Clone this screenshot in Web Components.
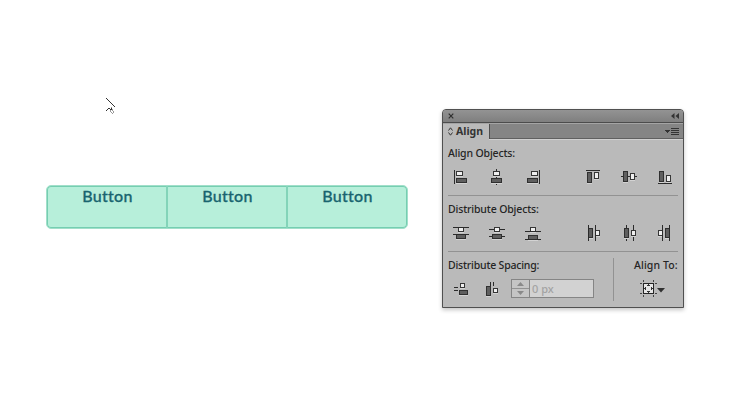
<!DOCTYPE html>
<html lang="en">
<head>
<meta charset="utf-8">
<title>Align panel</title>
<style>
html,body{margin:0;height:100%;background:#fff;overflow:hidden}
</style>
</head>
<body>
<design-canvas>
  <button-group>
    <group-button>Button</group-button>
    <group-button>Button</group-button>
    <group-button>Button</group-button>
  </button-group>
  <align-panel></align-panel>
  <canvas-cursor slot="cursor"></canvas-cursor>
</design-canvas>
<script>
function define(name, html, setup) {
  const template = document.createElement('template');
  template.innerHTML = html;
  customElements.define(name, class extends HTMLElement {
    constructor() {
      super();
      this.attachShadow({mode: 'open'}).appendChild(template.content.cloneNode(true));
    }
    connectedCallback() { if (setup) setup(this); }
  });
}

define('design-canvas', `<style>
:host{display:flex;position:relative;width:738px;height:420px;box-sizing:border-box;padding:109px 0 0 46px;align-items:flex-start;gap:34px}
</style><slot></slot><slot name="cursor"></slot>`);

define('canvas-cursor', `<style>
:host{position:absolute;left:105px;top:97px;width:12px;height:18px}svg{display:block}
</style><svg width="12" height="18" shape-rendering="crispEdges">
<path d="M1 1h1v1h1v1h1v1h1v1h1v1h1v1h1v1h1v1h1v1h-1v-1h-1v-1h-1v-1h-1v-1h-1v-1h-1v-1h-1v-1h-1v-1h-1z" fill="#333"/>
<path d="M1 13h1v1h-1zM2 12h1v1h-1zM3 11h2v1h-2zM5 12h1v1h-1zM6 11h1v2h-1z" fill="#333"/>
<path d="M6 10h1v1h-1zM5 13h1v2h-1zM7 12h1v2h-1zM8 14h1v2h-1zM6 15h1v1h-1zM7 16h1v1h-1z" fill="#999"/></svg>`);

define('button-group', `<style>
:host{display:flex;box-sizing:border-box;width:362px;height:44px;margin-top:76px;border:1px solid #a2dfca;border-radius:5px;background:#b7efda;box-shadow:inset 0 0 0 1px #75ceb1}
</style><slot></slot>`);

define('group-button', `<style>
:host{flex:1;display:block;box-sizing:border-box;text-align:center;font:500 16px/20px Lato,sans-serif;letter-spacing:.25px;-webkit-text-stroke:.3px #19646f;color:#19646f;padding:0 0 0 1px}
:host(:not(:first-child)){box-shadow:-1px 0 #83d4b9,inset 1px 0 #83d4b9}
</style><slot></slot>`);

/* Icon parts: w = hollow object, d = solid object, l = guide line; then x, y, width, height. */
const icons = {
  'left': 'l3,3,1,14 w5,4,7,5 d5,11,11,5',
  'center': 'l9,2,1,16 w6,4,7,5 d4,11,11,5',
  'right': 'l16,3,1,14 w8,4,7,5 d4,11,11,5',
  'top': 'l3,3,14,1 d4,5,5,11 w11,5,5,7',
  'middle': 'l2,9,16,1 d4,4,5,11 w11,6,5,7',
  'bottom': 'd4,4,5,11 w11,8,5,7 l3,16,14,1',
  'dist-top': 'w7,4,6,5 d5,11,10,5 l2,4,16,1 l2,11,16,1',
  'dist-middle': 'l2,6,16,1 l2,13,16,1 w7,4,6,5 d5,11,10,5',
  'dist-bottom': 'w7,4,6,5 d5,12,10,5 l2,8,16,1 l2,16,16,1',
  'dist-left': 'd5,5,5,10 w12,7,5,6 l5,2,1,16 l12,2,1,16',
  'dist-center': 'l7,2,1,16 l14,2,1,16 d5,5,5,10 w12,7,5,6',
  'dist-right': 'w3,7,5,6 d10,5,5,10 l7,2,1,16 l14,2,1,16',
  'space-v': 'w9,4,5,5 d8,11,9,5 l3,8,4,1 l3,11,4,1',
  'space-h': 'd4,7,5,10 w11,9,5,5 l8,3,1,4 l11,3,1,4'
};
define('align-icon', `<style>:host{display:block;width:20px;height:20px}svg{display:block}</style>
<svg width="20" height="20" shape-rendering="crispEdges"></svg>`, el => {
  const rect = (x, y, w, h, f) => `<rect x="${x}" y="${y}" width="${w}" height="${h}" fill="${f}"/>`;
  el.shadowRoot.querySelector('svg').innerHTML = icons[el.getAttribute('name')].split(' ').map(s => {
    const [x, y, w, h] = s.slice(1).split(',').map(Number);
    if (s[0] === 'l') return rect(x, y, w, h, '#2b2b2b');
    return rect(x, y + h, w, 1, '#d3d3d3') + rect(x, y, w, h, s[0] === 'w' ? '#363636' : '#303030')
      + rect(x + 1, y + 1, w - 2, h - 2, s[0] === 'w' ? '#efefef' : '#5f5f5f');
  }).join('');
});

define('align-section', `<style>
:host{display:block;height:56px;box-sizing:border-box;border-bottom:1px solid #929292}
h2{margin:0;font:500 10.500px/15px "Noto Sans",sans-serif;letter-spacing:-.15px;color:#252525}
.icons{display:flex;gap:16px;padding:6px 0 0 3px}
::slotted([split]){margin-left:24px}
</style><h2></h2><div class="icons"><slot></slot></div>`, el => {
  el.shadowRoot.querySelector('h2').textContent = el.getAttribute('heading');
});

define('panel-header', `<style>
:host{display:block;font:700 10.500px/15px "Noto Sans",sans-serif}
.title{display:flex;justify-content:space-between;align-items:center;height:12px;padding:0 4px 0 5px;background:linear-gradient(#939393,#7f7f7f);border-bottom:1px solid #4c4c4c}
.tabs{display:flex;justify-content:space-between;height:16px;background:#858585;border-top:1px solid #a4a4a4;box-sizing:border-box}
.tab{display:flex;align-items:center;gap:3px;width:47px;box-sizing:border-box;padding-left:5px;background:#bababa;border-right:1px solid #4e4e4e;color:#333}
.menu{margin:3px 4px 0 0}
.rule{height:1px;background:#d0d0d0;margin-left:46px;box-shadow:0 -1px #606060}
svg{display:block}
</style>
<div class="title"><svg width="6" height="6"><path d="M.7.7l4.6 4.6M5.3.7L.7 5.3" stroke="#303030" stroke-width="1.2"/></svg>
<svg width="8" height="6"><path d="M3.500 0v6L0 3zM8 0v6L4.500 3z" fill="#333"/></svg></div>
<div class="tabs"><div class="tab"><svg width="5" height="9"><path d="M.5 3.500l2-2.700 2 2.700M.5 5.500l2 2.700 2-2.700" fill="none" stroke="#333"/></svg><span>Align</span></div>
<svg class="menu" width="14" height="9" shape-rendering="crispEdges"><path d="M0 3h5v1h-1v1h-1v1h-1v-1h-1v-1h-1z" fill="#333"/><path d="M6 1h8v1H6zM6 3h8v1H6zM6 5h8v1H6zM6 7h8v1H6z" fill="#333"/></svg></div>
<div class="rule"></div>`);

define('spacing-section', `<style>
:host{display:flex;justify-content:space-between;height:50px;padding-top:6px;box-sizing:border-box;font:500 10.500px/15px "Noto Sans",sans-serif;color:#252525}
.left{width:165px;height:43px;border-right:1px solid #929292}
.label{white-space:nowrap;letter-spacing:-.2px}
.row{display:flex;padding:6px 0 0 3px}
.row>align-icon+align-icon{margin-left:11px}
.field{display:flex;box-sizing:border-box;width:83px;height:19px;margin-left:9px;border:1px solid #858585;background:#d2d2d2;color:#a3a3a3;font-size:11px;line-height:17px;flex:none}
.step{width:17px;border-right:1px solid #858585;background:#c5c5c5}
.step svg{display:block}
.field span{padding-left:2px}
.right{width:45px}
.right .label{letter-spacing:.1px;padding-left:1px}
.to{display:block;margin:6px 0 0 7px}
</style>
<div class="left"><div class="label">Distribute Spacing:</div>
<div class="row"><align-icon name="space-v"></align-icon><align-icon name="space-h"></align-icon>
<div class="field"><div class="step"><svg width="17" height="17"><path d="M0 8.500h17" stroke="#929292"/><path d="M5 6h7L8.500 2zM5 11h7l-3.500 4z" fill="#898989"/></svg></div><span>0 px</span></div></div></div>
<div class="right"><div class="label">Align To:</div>
<svg class="to" width="26" height="19" shape-rendering="crispEdges">
<path d="M3.500 1v17M13.500 1v17" stroke="#444" stroke-dasharray="2 1"/><path d="M0 4.500h18M0 14.500h18" stroke="#444" stroke-dasharray="2 1"/>
<rect x="3.500" y="4.500" width="10" height="10" fill="#e6e6e6" stroke="#252525"/>
<path d="M8 5h1v1h1v1H7V6h1zM7 12h3v1H9v1H8v-1H7zM4 9h1V8h1v3H5v-1H4zM11 8h1v1h1v1h-1v1h-1z" fill="#333"/>
<path d="M17 9h8l-4 4.500z" fill="#303030" shape-rendering="auto"/></svg></div>`);

define('align-panel', `<style>
:host{display:block;box-sizing:border-box;width:242px;height:199px;background:#bababa;border:1px solid #505050;border-radius:4px 4px 0 0;box-shadow:0 2px 4px rgba(0,0,0,.23);overflow:hidden}
.body{padding:6px 5px 0;display:block}
align-section+align-section{padding-top:6px;height:56px}
align-section:first-child{height:50px}
</style><panel-header></panel-header><div class="body">
<align-section heading="Align Objects:"><align-icon name="left"></align-icon><align-icon name="center"></align-icon><align-icon name="right"></align-icon><align-icon name="top" split></align-icon><align-icon name="middle"></align-icon><align-icon name="bottom"></align-icon></align-section>
<align-section heading="Distribute Objects:"><align-icon name="dist-top"></align-icon><align-icon name="dist-middle"></align-icon><align-icon name="dist-bottom"></align-icon><align-icon name="dist-left" split></align-icon><align-icon name="dist-center"></align-icon><align-icon name="dist-right"></align-icon></align-section>
<spacing-section></spacing-section></div>`);
</script>
</body>
</html>
